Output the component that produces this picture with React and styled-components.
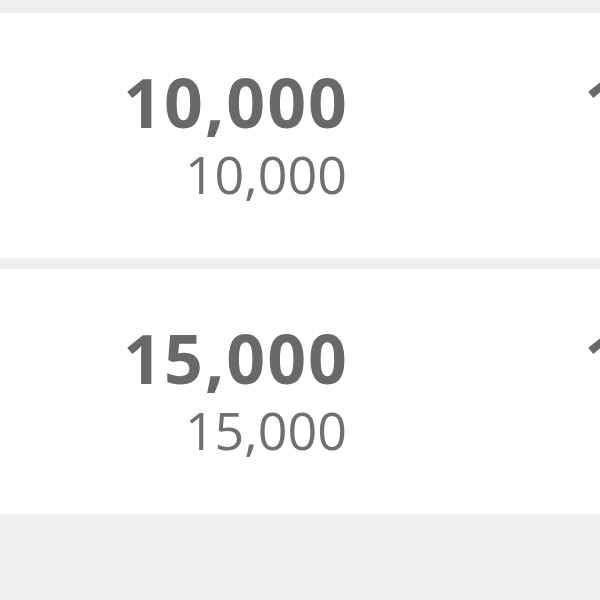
import React from "react";
import styled, { createGlobalStyle } from "styled-components";

const GlobalStyle = createGlobalStyle`
    html, body{
        margin: 0;
        padding: 0;
        background: #efeff0;
        overflow: hidden;
    }
    body{
        font-family: "Open Sans", "Noto Sans", sans-serif;
    }
`;

const rows = [
    { id: 1, cells: [["10,000", "10,000"], ["10,000", "10,000"]] },
    { id: 2, cells: [["15,000", "15,000"], ["15,000", "15,000"]] },
];

function App(){
    return(
        <ListStyled>
            <GlobalStyle />
            {rows.map(row => (
                <Card key={row.id}>
                    {row.cells.map(([main, sub], i) => (
                        <Cell key={i}>
                            <Amount>{main}</Amount>
                            <SubAmount>{sub}</SubAmount>
                        </Cell>
                    ))}
                </Card>
            ))}
        </ListStyled>
    )
}

const ListStyled = styled.div`
    display: flex;
    flex-direction: column;
    gap: 11px;
    padding-top: 13px;
    width: 900px;
    min-height: 600px;
`;

const Card = styled.div`
    display: grid;
    grid-template-columns: 349px 461px;
    background: #fff;
    height: 245px;
    box-sizing: border-box;
    padding-top: 55px;
`;

const Cell = styled.div`
    display: flex;
    flex-direction: column;
    align-items: flex-end;
    gap: 12px;
`;

const Amount = styled.div`
    font-size: 68px;
    line-height: 68px;
    font-weight: 700;
    color: #696969;
    letter-spacing: 2px;
`;

const SubAmount = styled.div`
    font-size: 52px;
    line-height: 52px;
    font-weight: 400;
    color: #707070;
    margin-right: 2px;
`;

export default App
